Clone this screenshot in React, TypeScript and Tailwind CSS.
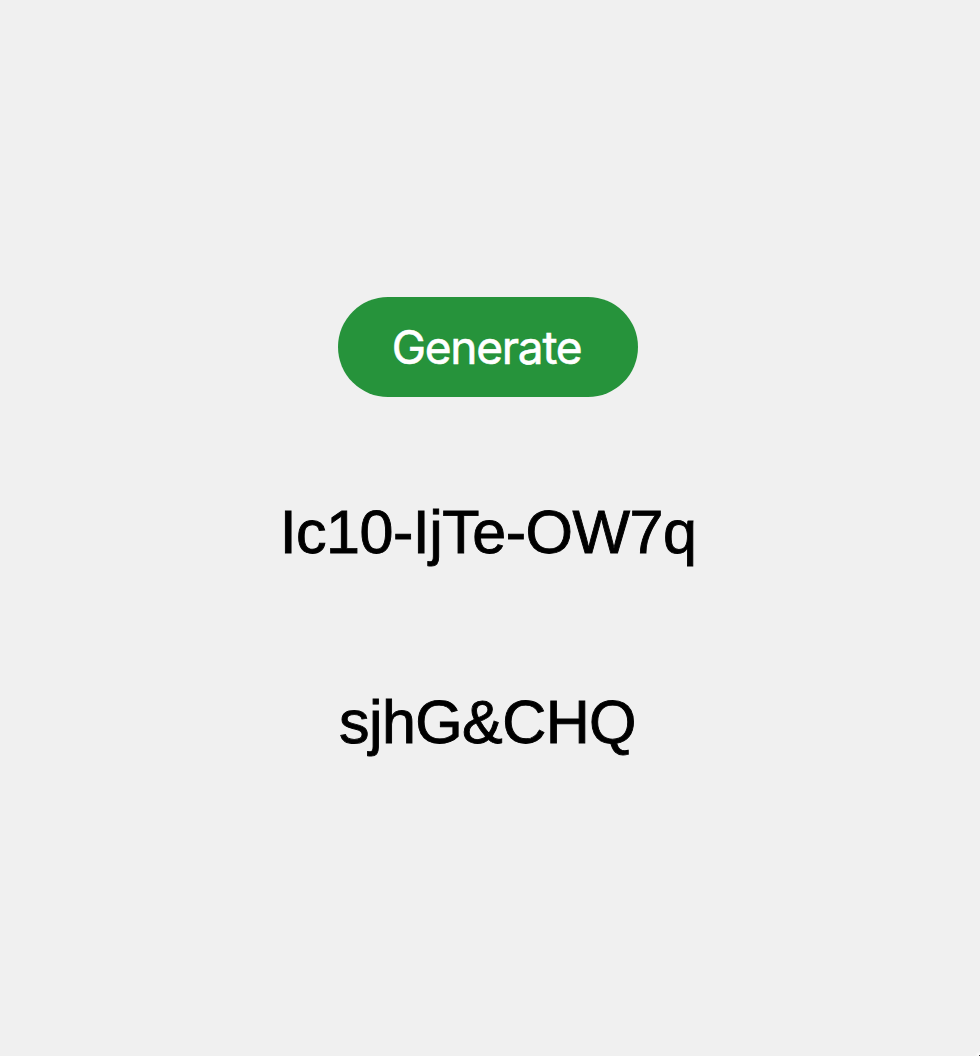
export default function App() {
  return (
    <main className="relative flex h-[1056px] w-full flex-col items-center overflow-hidden bg-[#f0f0f0] pr-1 pt-[297px] font-['Liberation_Sans',sans-serif] text-black">
      <button className="flex h-[100px] w-[300px] items-center justify-center rounded-full bg-[#26933b] pr-[3px] font-['Inter',sans-serif] text-[46px] leading-none tracking-[-1.25px] text-white [-webkit-text-stroke:0.6px_white]">
        Generate
      </button>
      <p className="mt-[97px] whitespace-nowrap text-[61px] leading-[76px] tracking-[-0.5px] [-webkit-text-stroke:0.9px_black]">Ic10-IjTe-OW7q</p>
      <p className="mt-[114px] whitespace-nowrap pr-px text-[61px] leading-[76px] tracking-[-0.6px] [-webkit-text-stroke:0.9px_black]">sjhG&amp;CHQ</p>
      <span className="absolute bottom-0 right-0 size-px bg-[#333] shadow-[0_0_3px_2px_white]" />
    </main>
  );
}
